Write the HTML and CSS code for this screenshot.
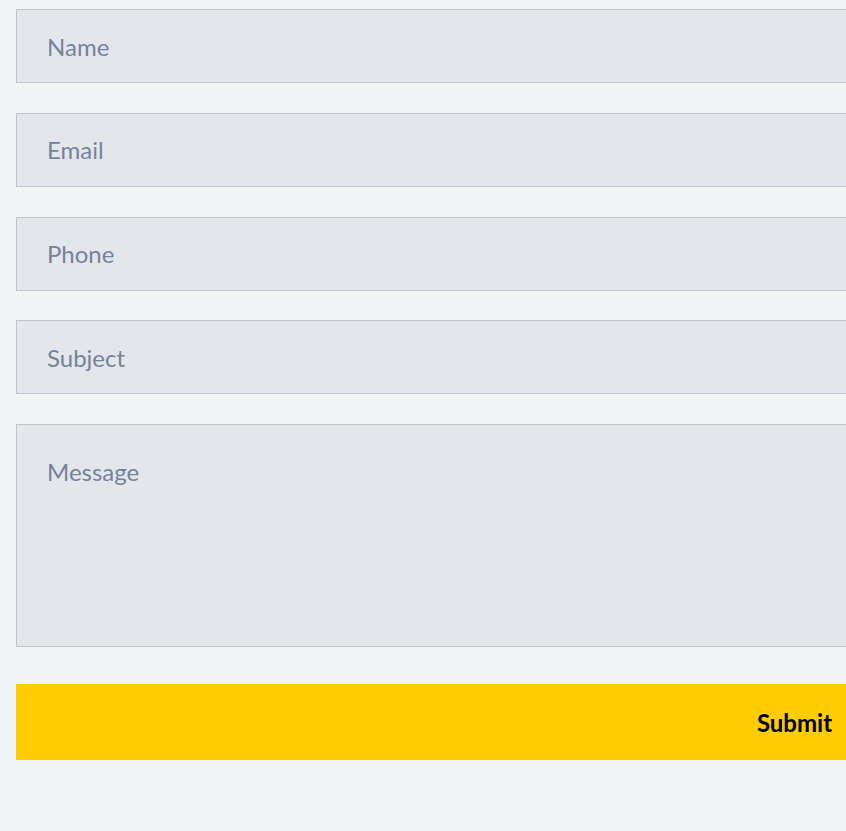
FILE: index.html
```
<!DOCTYPE html>
<html lang="en">
  <head>
    <meta charset="UTF-8" />
    <meta name="viewport" content="width=device-width, initial-scale=1.0" />
    <title>Contact</title>
    <link rel="stylesheet" href="styles.css">
  </head>
  <body>
    <div class="page">
      <form class="contact">
        <input class="field" type="text" placeholder="Name" />
        <input class="field" type="email" placeholder="Email" />
        <input class="field" type="tel" placeholder="Phone" />
        <input class="field" type="text" placeholder="Subject" />
        <textarea class="field message" placeholder="Message"></textarea>
        <button class="submit" type="button">Submit</button>
      </form>
    </div>
  </body>
</html>
```

FILE: styles.css
```
html,
body {
  margin: 0;
  padding: 0;
  background: #f3f4f6;
}
.page {
  width: 100%;
  min-height: 831px;
  overflow: hidden;
  padding: 9px 0 0 16px;
  box-sizing: border-box;
}
.contact {
  width: 1557px;
  display: flex;
  flex-direction: column;
}
.field {
  display: block;
  box-sizing: border-box;
  width: 100%;
  height: 74px;
  margin: 0 0 29.75px 0;
  padding: 0 30px;
  border: 1px solid #bfc5cf;
  border-radius: 0;
  background: #e3e7ec;
  font-family: Lato, "Liberation Sans", sans-serif;
  font-size: 24px;
  color: #333;
  outline: none;
}
.field::placeholder {
  color: #76839b;
  opacity: 1;
}
.message {
  height: 223px;
  padding: 30px;
  line-height: 1.4;
  resize: none;
  margin-bottom: 37px;
}
.submit {
  width: 100%;
  height: 76px;
  border: none;
  border-radius: 0;
  background: #ffcc00;
  color: #000;
  font-family: Lato, "Liberation Sans", sans-serif;
  font-size: 24px;
  font-weight: bold;
  cursor: pointer;
}
```
